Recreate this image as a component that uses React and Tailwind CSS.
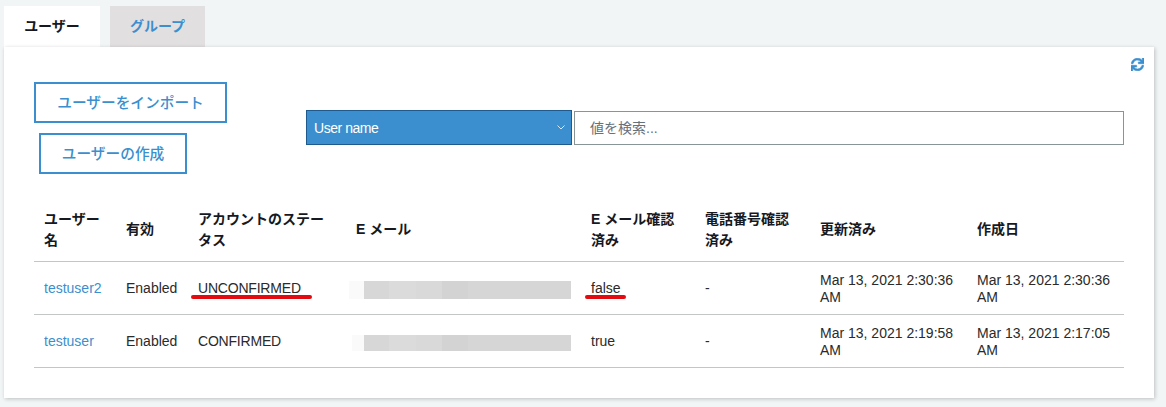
import { FaSync } from "react-icons/fa";

const font = "font-['Liberation_Sans','Noto_Sans_CJK_JP',sans-serif]";

const columns = ["w-[82px]", "w-[72px]", "w-[158px]", "w-[235px]", "w-[114px]", "w-[115px]", "w-[157px]", "w-[157px]"];

const headers = ["ユーザー名", "有効", "アカウントのステータス", "E メール", "E メール確認済み", "電話番号確認済み", "更新済み", "作成日"];

const users = [
  {
    name: "testuser2",
    status: "UNCONFIRMED",
    verified: "false",
    updated: "Mar 13, 2021 2:30:36 AM",
    created: "Mar 13, 2021 2:30:36 AM",
    marked: true,
  },
  {
    name: "testuser",
    status: "CONFIRMED",
    verified: "true",
    updated: "Mar 13, 2021 2:19:58 AM",
    created: "Mar 13, 2021 2:17:05 AM",
    marked: false,
  },
];

const BlurredEmail = ({ marked }) => (
  <div className={`flex ${marked ? "h-[18px] mt-[4px] ml-[3px]" : "h-[16px] mt-[4px] ml-[6px]"}`}>
    <div className={`${marked ? "w-[15px]" : "w-[12px]"} bg-[#fafafa]`}></div>
    <div className="w-[25px] bg-[#d6d7d6]"></div>
    <div className="w-[27px] bg-[#dbdbdb]"></div>
    <div className="w-[26px] bg-[#d9d9d9]"></div>
    <div className="w-[26px] bg-[#d2d3d2]"></div>
    <div className="w-[103px] bg-[#d5d6d5]"></div>
  </div>
);

export default function App() {
  return (
    <div className={`${font} w-[1166px] h-[407px] bg-[#f2f5f6] pt-[6px] pl-[4px] text-[14px] text-[#2a2a2a] overflow-hidden`}>
      <div className="flex h-[41px] font-bold">
        <div className="w-[96px] h-[41px] bg-white flex items-center justify-center text-[#16191f]">ユーザー</div>
        <div className="w-[95px] h-[41px] ml-[10px] bg-[#e1dfe0] flex items-center justify-center text-[#3b8fce]">グループ</div>
      </div>

      <div className="relative w-[1150px] h-[351px] bg-white shadow-[1px_1px_4px_rgba(0,0,0,0.22)] pt-[35px] px-[30px]">
        <FaSync className="absolute right-[10px] top-[11px] text-[#3b8fce]" size={13} stroke="currentColor" strokeWidth={24} />

        <div className="flex h-[92px]">
          <div className="flex flex-col items-start w-[272px]">
            <button className="w-[193px] h-[41px] pt-[2px] border-2 border-[#3b8fce] text-[#3b8fce] text-[14.7px] font-medium">ユーザーをインポート</button>
            <button className="w-[148px] h-[41px] pt-[2px] mt-[10px] ml-[5px] border-2 border-[#3b8fce] text-[#3b8fce] text-[14.7px] font-medium">ユーザーの作成</button>
          </div>
          <div className="flex items-start gap-[2px] mt-[28px]">
            <div className="w-[266px] h-[35px] bg-[#3b8fce] border border-[#1f5a8e] text-white pl-[7px] pr-[6px] flex items-center justify-between">
              <span className="pt-[1px] tracking-[-0.45px]">User name</span>
              <svg width="8" height="5" viewBox="0 0 8 5" fill="none" stroke="#d5e6f4" strokeWidth="1">
                <path d="M0.5 0.5l3.5 3.5 3.5-3.5" />
              </svg>
            </div>
            <div className="w-[550px] h-[34px] mt-[1px] border border-[#879596] flex items-center pl-[15px] text-[#687078]">値を検索...</div>
          </div>
        </div>

        <table className="w-[1090px] mt-[26px] table-fixed border-collapse leading-[21px]">
          <colgroup>
            {columns.map((c, i) => (
              <col key={i} className={c} />
            ))}
          </colgroup>
          <thead>
            <tr className="h-[61px] border-b border-[#c4c6c6]">
              {headers.map((h) => (
                <th key={h} className="px-[10px] pb-[1px] text-left font-bold text-[#16191f]">{h}</th>
              ))}
            </tr>
          </thead>
          <tbody>
            {users.map((u) => (
              <tr key={u.name} className="h-[53px] border-b border-[#c4c6c6]">
                <td className="px-[10px] pt-[2px] text-[#3b8fce]">{u.name}</td>
                <td className="px-[10px] pt-[2px]">Enabled</td>
                <td className="px-[10px] pt-[2px] relative tracking-[-0.2px]">
                  {u.status}
                  {u.marked && <div className="absolute left-[3px] top-[33px] w-[121px] h-[4px] rounded-full bg-[#e30b0f]"></div>}
                </td>
                <td className="p-0">
                  <BlurredEmail marked={u.marked} />
                </td>
                <td className="px-[10px] pt-[2px] relative">
                  {u.verified}
                  {u.marked && <div className="absolute left-[4px] top-[33px] w-[41px] h-[4px] rounded-full bg-[#e30b0f]"></div>}
                </td>
                <td className="px-[10px] pt-[2px]">-</td>
                <td className="px-[10px] pt-[2px] leading-[17px]">{u.updated}</td>
                <td className="px-[10px] pt-[2px] leading-[17px]">{u.created}</td>
              </tr>
            ))}
          </tbody>
        </table>
      </div>
    </div>
  );
}
